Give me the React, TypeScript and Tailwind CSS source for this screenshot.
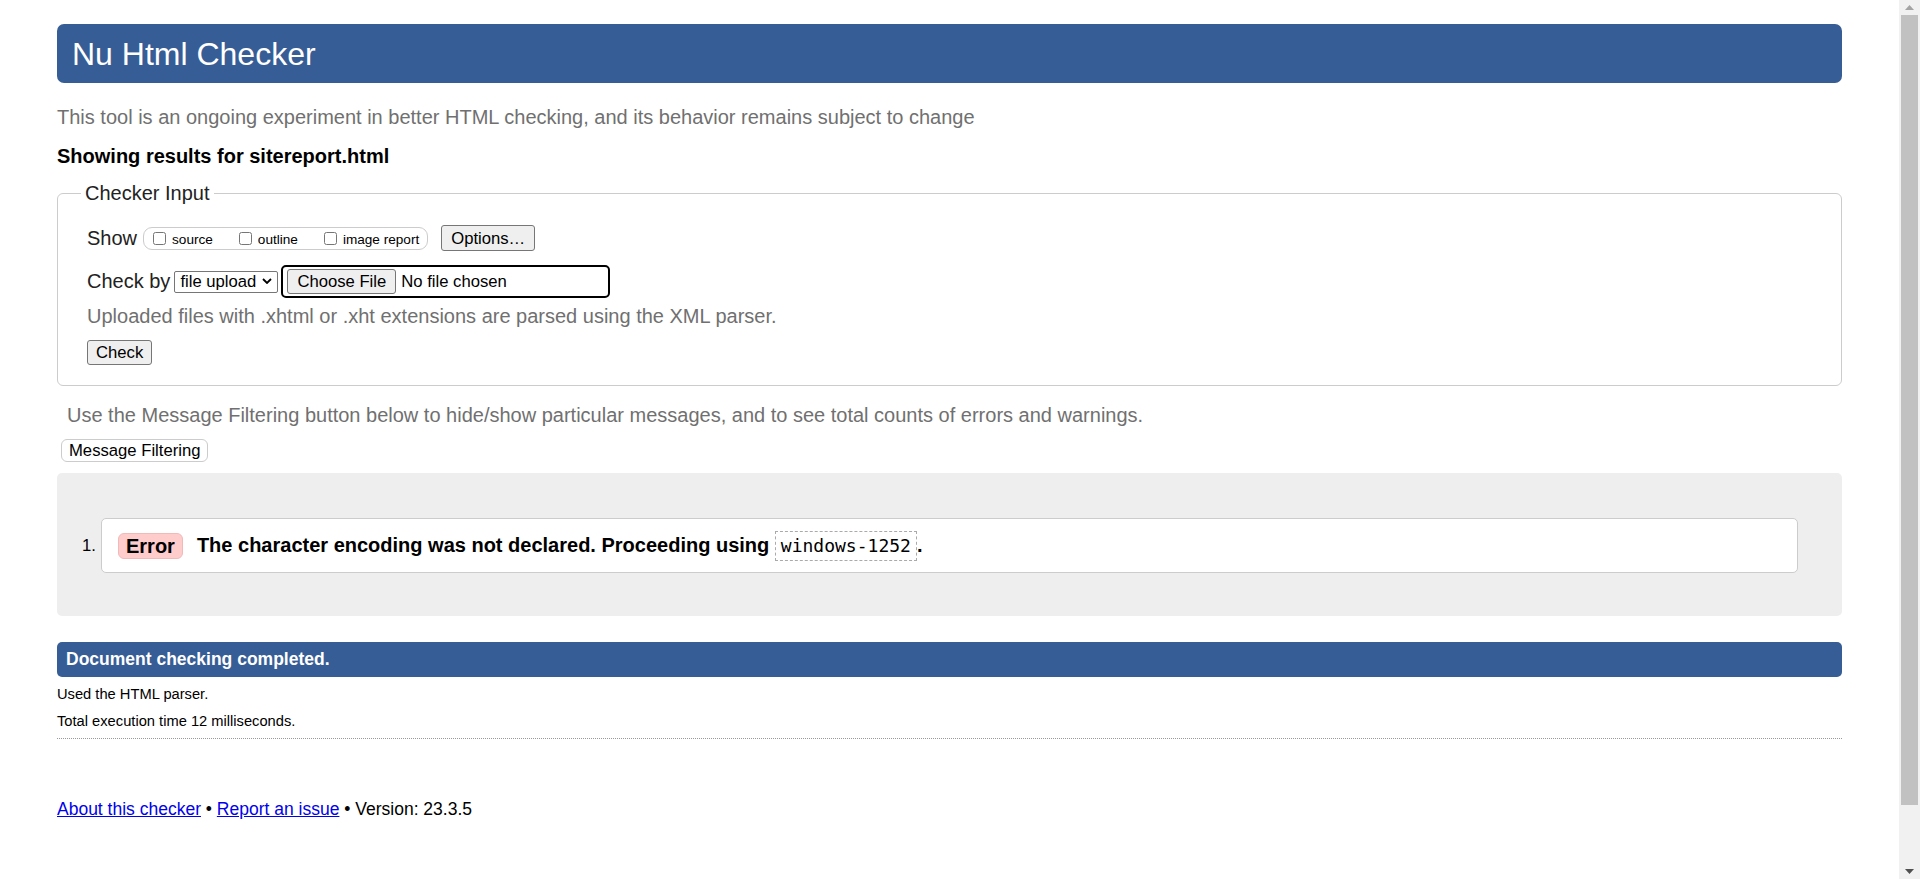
import React from 'react';

// chrome-ish default button look (preflight strips it)
const btn =
  'bg-[#efefef] border border-[#767676] rounded-[3px] text-[16.67px] leading-[19px] text-black';

const App: React.FC = () => {
  return (
    <div className="flex h-[879px] w-full overflow-hidden bg-white font-['Liberation_Sans',Arial,sans-serif] text-[#222222]">
      <div className="flex-1 px-[57px] pt-[24px]">
        {/* Title bar */}
        <h1 className="flex h-[59px] items-center rounded-[7px] bg-[#365d95] px-[15px] text-[32px] leading-none font-normal text-white">
          Nu Html Checker
        </h1>

        <p className="mt-[23px] text-[20px] leading-[23px] text-[#707070]">
          This tool is an ongoing experiment in better HTML checking, and its behavior remains subject to change
        </p>
        <p className="mt-[16px] text-[20px] leading-[23px] font-bold text-black">
          Showing results for sitereport.html
        </p>

        {/* Checker input */}
        <fieldset className="mt-[14px] rounded-[6px] border border-[#cccccc] px-[23px] pb-[20px]">
          <legend className="px-[4px] text-[20px] leading-[23px]">Checker Input</legend>
          <div className="pt-[20px] pl-[6px]">
            <div className="flex h-[26px] items-center">
              <span className="text-[20px] leading-[23px]">Show</span>
              <div className="ml-[6px] flex h-[23px] items-center rounded-[9px] border border-[#cccccc] pr-[8px] pl-[9px] text-[13.6px] leading-[16px] text-black">
                <label className="flex items-center">
                  <input type="checkbox" className="m-0 h-[13px] w-[13px]" />
                  <span className="ml-[6px] pt-[3px]">source</span>
                </label>
                <label className="ml-[26px] flex items-center">
                  <input type="checkbox" className="m-0 h-[13px] w-[13px]" />
                  <span className="ml-[6px] pt-[3px]">outline</span>
                </label>
                <label className="ml-[26px] flex items-center">
                  <input type="checkbox" className="m-0 h-[13px] w-[13px]" />
                  <span className="ml-[6px] pt-[3px]">image report</span>
                </label>
              </div>
              <button className={`ml-[13px] h-[26px] px-[9px] ${btn}`}>Options…</button>
            </div>

            <div className="mt-[14px] flex h-[33px] items-center">
              <span className="text-[20px] leading-[23px]">Check by</span>
              <div className="relative ml-[4px]">
                <select className="h-[22px] w-[104px] appearance-none rounded-[2px] border border-[#767676] bg-white pl-[5px] text-[16.67px] leading-[20px] text-black">
                  <option>file upload</option>
                  <option>address</option>
                  <option>text input</option>
                </select>
                <svg
                  className="pointer-events-none absolute top-[8px] right-[6px]"
                  width="10"
                  height="6"
                  viewBox="0 0 10 6"
                >
                  <path d="M1 1 L5 5 L9 1" fill="none" stroke="#000" strokeWidth="1.8" />
                </svg>
              </div>
              <div className="ml-[3px] flex h-[33px] w-[329px] items-center rounded-[5px] border-2 border-black pl-[4px]">
                <button className={`h-[25px] px-[9px] ${btn}`}>Choose File</button>
                <span className="ml-[5px] text-[16.67px] text-black">No file chosen</span>
              </div>
            </div>

            <p className="mt-[7px] text-[20px] leading-[23px] text-[#707070]">
              Uploaded files with .xhtml or .xht extensions are parsed using the XML parser.
            </p>
            <button className={`mt-[12px] h-[25px] px-[8px] ${btn}`}>Check</button>
          </div>
        </fieldset>

        <p className="mt-[18px] pl-[10px] text-[20px] leading-[23px] text-[#707070]">
          Use the Message Filtering button below to hide/show particular messages, and to see total counts of errors and warnings.
        </p>
        <button className="mt-[12px] ml-[4px] h-[23px] rounded-[6px] border border-[#cccccc] bg-white px-[7px] text-[16.67px] leading-[19px] text-black">
          Message Filtering
        </button>

        {/* Results */}
        <div className="mt-[10px] rounded-[5px] bg-[#eeeeee] pt-[45px] pr-[44px] pb-[43px] pl-[25px]">
          <div className="flex items-center">
            <span className="w-[19px] text-[16.67px] text-black">1.</span>
            <div className="flex h-[55px] flex-1 items-center rounded-[5px] border border-[#cccccc] bg-white pl-[16px]">
              <span className="flex h-[26px] items-center rounded-[6px] border border-[#f2b9b9] bg-[#ffcccc] px-[7px] text-[20px] font-bold text-black">
                Error
              </span>
              <p className="ml-[14px] text-[20px] font-bold text-black">
                The character encoding was not declared. Proceeding using{' '}
                <code className="inline-block h-[30px] border border-dashed border-[#aaaaaa] px-[5px] align-middle font-['DejaVu_Sans_Mono',monospace] text-[18px] leading-[28px] font-normal">
                  windows-1252
                </code>
                .
              </p>
            </div>
          </div>
        </div>

        <div className="mt-[26px] flex h-[35px] items-center rounded-[5px] bg-[#365d95] pl-[9px] text-[17.5px] font-bold text-white">
          Document checking completed.
        </div>
        <p className="mt-[9px] text-[14.7px] leading-[17px] text-black">Used the HTML parser.</p>
        <p className="mt-[10px] text-[14.7px] leading-[17px] text-black">Total execution time 12 milliseconds.</p>
        <hr className="mt-[8px] border-0 border-t border-dotted border-[#999999]" />

        <p className="mt-[60px] text-[17.5px] leading-[20px] text-black">
          <a href="#" className="text-[#0000ee] underline">About this checker</a> •{' '}
          <a href="#" className="text-[#0000ee] underline">Report an issue</a> • Version: 23.3.5
        </p>
      </div>

      {/* window scrollbar */}
      <div className="flex w-[21px] flex-col bg-[#f1f1f1]">
        <div className="flex h-[15px] items-center justify-center">
          <svg width="9" height="5" viewBox="0 0 9 5">
            <path d="M0 5 L4.5 0 L9 5 Z" fill="#a3a3a3" />
          </svg>
        </div>
        <div className="mx-[2px] h-[790px] bg-[#c1c1c1]" />
        <div className="flex-1" />
        <div className="flex h-[15px] items-center justify-center">
          <svg width="9" height="5" viewBox="0 0 9 5">
            <path d="M0 0 L9 0 L4.5 5 Z" fill="#505050" />
          </svg>
        </div>
      </div>
    </div>
  );
};

export default App;
